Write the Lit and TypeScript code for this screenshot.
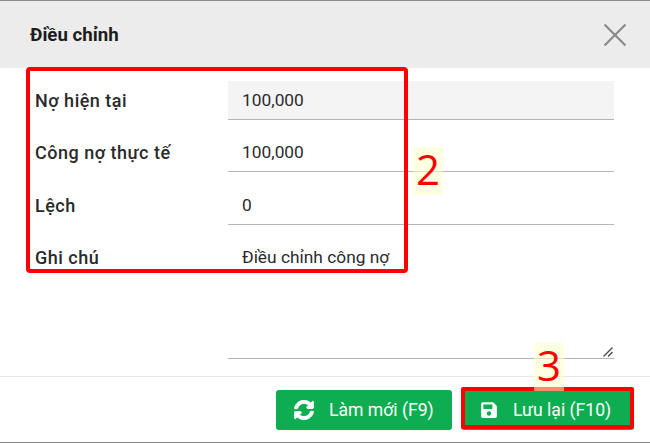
import { LitElement, html, css } from "lit";
import { customElement } from "lit/decorators.js";

@customElement("app-root")
export class AppRoot extends LitElement {
  static styles = css`
    :host {
      display: block;
      width: 650px;
      height: 443px;
      overflow: hidden;
      font-family: Roboto, "Noto Sans", sans-serif;
      color: #212529;
    }
    .dialog {
      position: relative;
      box-sizing: border-box;
      width: 650px;
      height: 443px;
      background: #fff;
      border-top: 1px solid #8a8a8a;
      border-bottom: 1px solid #8a8a8a;
      display: flex;
      flex-direction: column;
    }
    .header {
      height: 67px;
      flex: none;
      background: #ececec;
      display: flex;
      align-items: center;
      justify-content: space-between;
      padding: 0 24px 0 30px;
      box-sizing: border-box;
    }
    .title {
      font-size: 18.67px;
      font-weight: 700;
      color: #1c1c1c;
    }
    .close {
      display: block;
      width: 22px;
      height: 22px;
    }
    .body {
      flex: 1;
      display: flex;
      flex-direction: column;
      gap: 13.4px;
      padding: 13px 36px 0 35px;
    }
    .row {
      display: flex;
      height: 39px;
    }
    .row.tall {
      height: 121px;
    }
    .label {
      width: 193px;
      flex: none;
      font-size: 18px;
      font-weight: 500;
      letter-spacing: 0.5px;
      line-height: 39px;
      color: #2a2a2a;
    }
    .field {
      flex: 1;
      box-sizing: border-box;
      border-bottom: 1px solid #b5b5b5;
      padding-left: 14px;
      font-size: 17.33px;
      line-height: 38px;
      color: #2b2b2b;
      position: relative;
    }
    .field.ro {
      background: #f4f4f4;
    }
    .grip {
      position: absolute;
      right: 1px;
      bottom: 1px;
      width: 10px;
      height: 10px;
    }
    .footer {
      flex: none;
      height: 66px;
      box-sizing: border-box;
      border-top: 1px solid #e8e8e8;
      display: flex;
      justify-content: flex-end;
      gap: 9px;
      padding: 13px 16px 0 0;
    }
    .btn {
      height: 40px;
      box-sizing: border-box;
      background: #0fad52;
      color: #fff;
      border-radius: 3px;
      display: flex;
      align-items: center;
      font-size: 17.6px;
      font-weight: 400;
      white-space: nowrap;
    }
    .btn.refresh {
      width: 176px;
      padding-left: 18px;
      gap: 15px;
    }
    .btn.save {
      width: 173px;
      padding-left: 19px;
      gap: 15px;
    }
    .btn svg {
      display: block;
      flex: none;
    }
    .box {
      position: absolute;
      box-sizing: border-box;
      border: 4px solid #fe0000;
      border-radius: 4px;
    }
    .box.form {
      left: 26px;
      top: 66px;
      width: 382px;
      height: 206px;
    }
    .box.btnbox {
      left: 461px;
      top: 386px;
      width: 173px;
      height: 42px;
      border-radius: 2px;
    }
    .num {
      position: absolute;
      width: 30px;
      height: 48px;
      background: rgba(255, 255, 200, 0.55);
      color: #fe0000;
      font-family: "Open Sans", sans-serif;
      font-size: 42px;
      line-height: 44px;
      text-align: center;
    }
    .num.two {
      left: 413px;
      top: 146px;
    }
    .num.three {
      left: 534px;
      top: 342px;
    }
  `;

  render() {
    return html`
      <div class="dialog">
        <div class="header">
          <div class="title">Điều chỉnh</div>
          <svg class="close" viewBox="0 0 22 22" fill="none" stroke="#8a8a8a" stroke-width="2.2">
            <path d="M0.5 0.5L21.5 21.5M21.5 0.5L0.5 21.5" />
          </svg>
        </div>
        <div class="body">
          <div class="row">
            <div class="label">Nợ hiện tại</div>
            <div class="field ro">100,000</div>
          </div>
          <div class="row">
            <div class="label">Công nợ thực tế</div>
            <div class="field">100,000</div>
          </div>
          <div class="row">
            <div class="label">Lệch</div>
            <div class="field">0</div>
          </div>
          <div class="row tall">
            <div class="label">Ghi chú</div>
            <div class="field">
              Điều chỉnh công nợ
              <svg class="grip" viewBox="0 0 10 10" fill="none" stroke="#444" stroke-width="1.3">
                <path d="M0.5 9.5L9.5 0.5M5 9.5L9.5 5" />
              </svg>
            </div>
          </div>
        </div>
        <div class="footer">
          <div class="btn refresh">
            <svg width="20" height="20" viewBox="0 0 512 512" fill="#fff">
              <path d="M370.7 133.3C339.5 104 298.9 88 255.8 88c-77.5.1-144.3 53.2-162.8 126.9-1.3 5.4-6.1 9.1-11.7 9.1H24.1c-7.5 0-13.2-6.8-11.8-14.2C33.9 94.9 134.8 8 256 8c66.4 0 126.8 26.1 171.3 68.7L463 41c15.1-15.1 41-4.4 41 17v134c0 13.3-10.7 24-24 24H346c-21.4 0-32.1-25.9-17-41l41.7-41.7zM32 296h134c21.4 0 32.1 25.9 17 41l-41.7 41.7c31.2 29.3 71.8 45.3 114.9 45.3 77.4-.1 144.3-53.1 162.8-126.9 1.3-5.4 6.1-9.1 11.7-9.1h57.3c7.5 0 13.2 6.8 11.8 14.2C478.1 417.1 377.2 504 256 504c-66.4 0-126.8-26.1-171.3-68.7L49 471c-15.1 15.1-41 4.4-41-17V320c0-13.3 10.7-24 24-24z" stroke="#fff" stroke-width="22" />
            </svg>
            <span>Làm mới (F9)</span>
          </div>
          <div class="btn save">
            <svg width="18" height="18" viewBox="0 0 448 512" fill="#fff">
              <path d="M433.9 129.9l-83.9-83.9A48 48 0 0 0 316.1 32H48C21.5 32 0 53.5 0 80v352c0 26.5 21.5 48 48 48h352c26.5 0 48-21.5 48-48V163.9a48 48 0 0 0-14.1-34zM224 416c-35.3 0-64-28.7-64-64 0-35.3 28.7-64 64-64s64 28.7 64 64c0 35.3-28.7 64-64 64zm96-304.5V212c0 6.6-5.4 12-12 12H76c-6.6 0-12-5.4-12-12V108c0-6.6 5.4-12 12-12h228.5c3.2 0 6.2 1.3 8.5 3.5l3.5 3.5c2.2 2.2 3.5 5.3 3.5 8.5z" />
            </svg>
            <span>Lưu lại (F10)</span>
          </div>
        </div>
        <div class="box form"></div>
        <div class="box btnbox"></div>
        <div class="num two">2</div>
        <div class="num three">3</div>
      </div>
    `;
  }
}
